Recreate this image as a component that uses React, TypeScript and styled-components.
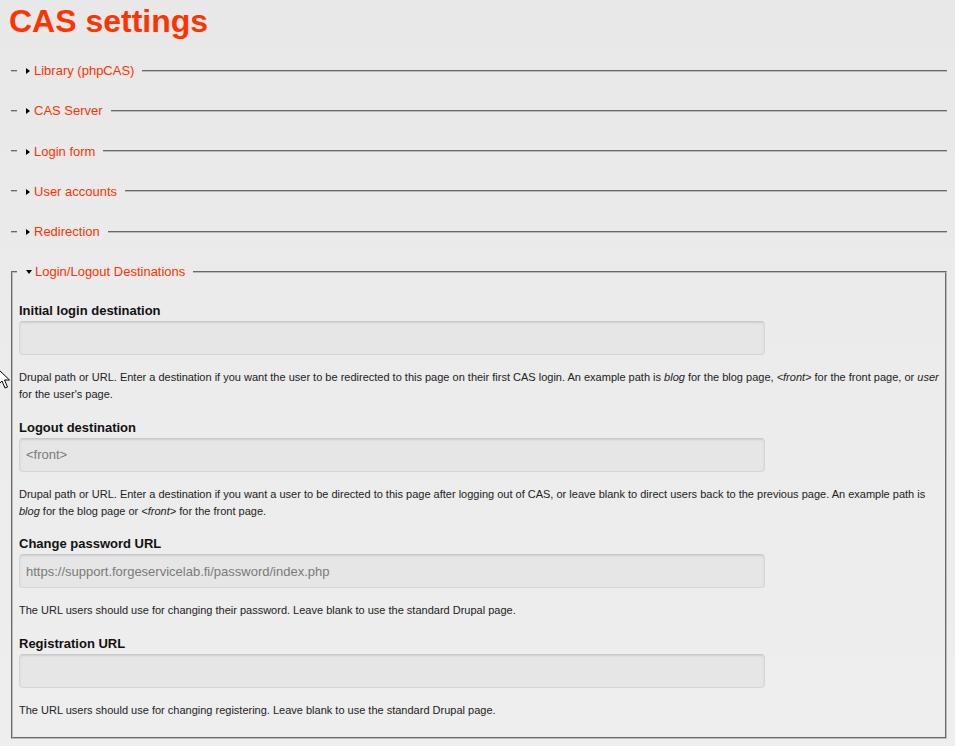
import React from "react";
import styled, { createGlobalStyle } from "styled-components";

const GlobalStyle = createGlobalStyle`
  html, body {
    margin: 0;
    padding: 0;
  }
  body {
    background: linear-gradient(to bottom, #e8e8e8 0px, #ececec 400px, #eeeeee 746px);
    font-family: "Liberation Sans", Arial, sans-serif;
    color: #111;
    min-height: 746px;
  }
`;

const Page = styled.div`
  position: relative;
  padding: 3px 8px 0 8px;
  min-height: 743px;
  box-sizing: border-box;
  overflow: hidden;
`;

const Title = styled.h1`
  margin: 0 0 23px 0;
  padding-left: 1px;
  font-size: 32px;
  line-height: 37px;
  font-weight: 700;
  color: #ff3300;
`;

const Fieldset = styled.fieldset<{ $open?: boolean }>`
  margin: 0 0 25.25px 3px;
  min-width: 0;
  padding: ${(p) => (p.$open ? "0 4px 0 4px" : "0 0 0 6px")};
  border: 2px groove #bcbcbc;
  ${(p) =>
    p.$open
      ? ""
      : `
    border-left-width: 0;
    border-right-width: 0;
    border-bottom-width: 0;
  `}
`;

const Legend = styled.legend`
  padding: 0 8px 0 9px;
  font-size: 13px;
  line-height: 15px;
  color: #ff3300;
  display: flex;
  align-items: center;
`;

const Triangle = styled.span<{ $open?: boolean }>`
  display: inline-block;
  width: 0;
  height: 0;
  ${(p) =>
    p.$open
      ? `
    border-top: 4px solid #000;
    border-left: 3.5px solid transparent;
    border-right: 3.5px solid transparent;
    margin-right: 3px;
    margin-top: 1px;
  `
      : `
    border-left: 4px solid #000;
    border-top: 3.5px solid transparent;
    border-bottom: 3.5px solid transparent;
    margin-right: 4px;
    margin-top: 1px;
  `}
`;

const Body = styled.div`
  padding: 24px 2px 18px 2px;
  display: flex;
  flex-direction: column;
  gap: 16.5px;
`;

const Item = styled.div`
  display: flex;
  flex-direction: column;
`;

const Label = styled.label`
  font-size: 13px;
  line-height: 16px;
  font-weight: 700;
  color: #111;
  margin-bottom: 2px;
`;

const TextInput = styled.input`
  display: block;
  box-sizing: border-box;
  width: 746px;
  height: 34px;
  margin: 0;
  padding: 0 6px;
  border: 1px solid #d6d6d6;
  border-top-color: #c9c9c9;
  border-radius: 4px;
  background: #e6e6e6;
  box-shadow: inset 0 1px 2px rgba(0, 0, 0, 0.1);
  font-family: "Liberation Sans", Arial, sans-serif;
  font-size: 13px;
  color: #7a7a7a;
  outline: none;
`;

const Description = styled.div`
  margin-top: 14px;
  font-size: 11px;
  line-height: 17px;
  color: #222;

  em {
    font-style: italic;
  }
`;

const Cursor = styled.svg`
  position: absolute;
  left: -3px;
  top: 368px;
  width: 14px;
  height: 22px;
  pointer-events: none;
`;

const collapsed = [
  "Library (phpCAS)",
  "CAS Server",
  "Login form",
  "User accounts",
  "Redirection",
];

type Field = {
  label: string;
  value: string;
  description: React.ReactNode;
};

const fields: Field[] = [
  {
    label: "Initial login destination",
    value: "",
    description: (
      <>
        Drupal path or URL. Enter a destination if you want the user to be
        redirected to this page on their first CAS login. An example path is{" "}
        <em>blog</em> for the blog page, <em>&lt;front&gt;</em> for the front
        page, or <em>user</em> for the user's page.
      </>
    ),
  },
  {
    label: "Logout destination",
    value: "<front>",
    description: (
      <>
        Drupal path or URL. Enter a destination if you want a user to be
        directed to this page after logging out of CAS, or leave blank to
        direct users back to the previous page. An example path is{" "}
        <em>blog</em> for the blog page or <em>&lt;front&gt;</em> for the front
        page.
      </>
    ),
  },
  {
    label: "Change password URL",
    value: "https://support.forgeservicelab.fi/password/index.php",
    description: (
      <>
        The URL users should use for changing their password. Leave blank to
        use the standard Drupal page.
      </>
    ),
  },
  {
    label: "Registration URL",
    value: "",
    description: (
      <>
        The URL users should use for changing registering. Leave blank to use
        the standard Drupal page.
      </>
    ),
  },
];

export default function App() {
  return (
    <>
      <GlobalStyle />
      <Page>
        <Title>CAS settings</Title>
        {collapsed.map((name) => (
          <Fieldset key={name}>
            <Legend>
              <Triangle />
              {name}
            </Legend>
          </Fieldset>
        ))}
        <Fieldset $open>
          <Legend>
            <Triangle $open />
            Login/Logout Destinations
          </Legend>
          <Body>
            {fields.map((f) => (
              <Item key={f.label}>
                <Label>{f.label}</Label>
                <TextInput type="text" defaultValue={f.value} readOnly />
                <Description>{f.description}</Description>
              </Item>
            ))}
          </Body>
        </Fieldset>
        <Cursor viewBox="0 0 14 22">
          <path
            d="M1 1 L1 17 L5 13 L8 20 L10.5 19 L7.5 12 L12.5 12 Z"
            fill="#fff"
            stroke="#000"
            strokeWidth="1"
            strokeLinejoin="miter"
          />
        </Cursor>
      </Page>
    </>
  );
}
